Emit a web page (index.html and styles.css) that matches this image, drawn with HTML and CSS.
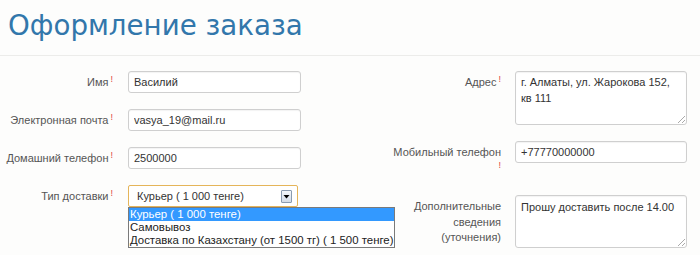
FILE: index.html
```html
<!DOCTYPE html>
<html lang="ru">
<head>
<meta charset="utf-8">
<title>Оформление заказа</title>
<link rel="stylesheet" href="styles.css">
</head>
<body>
<div class="page">
  <header class="header">
    <h1 class="title">Оформление заказа</h1>
  </header>
  <form class="form">
    <div class="col col-left">
      <div class="row">
        <label class="label">Имя<sup class="req">!</sup></label>
        <div class="field"><input class="input" type="text" value="Василий"></div>
      </div>
      <div class="row">
        <label class="label">Электронная почта<sup class="req">!</sup></label>
        <div class="field"><input class="input" type="text" value="vasya_19@mail.ru"></div>
      </div>
      <div class="row">
        <label class="label">Домашний телефон<sup class="req">!</sup></label>
        <div class="field"><input class="input" type="text" value="2500000"></div>
      </div>
      <div class="row">
        <label class="label">Тип доставки<sup class="req">!</sup></label>
        <div class="field field-select">
          <div class="select">
            <span class="select-value">Курьер ( 1 000 тенге)</span>
            <span class="select-btn">
              <svg width="9" height="9" viewBox="0 0 9 9"><path d="M1.5 3h6L4.5 6.5z" fill="#000"/></svg>
            </span>
          </div>
          <ul class="dropdown">
            <li class="option active">Курьер ( 1 000 тенге)</li>
            <li class="option">Самовывоз</li>
            <li class="option">Доставка по Казахстану (от 1500 тг) ( 1 500 тенге)</li>
          </ul>
        </div>
      </div>
    </div>
    <div class="col col-right">
      <div class="row">
        <label class="label">Адрес<sup class="req">!</sup></label>
        <div class="field"><div class="textarea">г. Алматы, ул. Жарокова 152, кв 111<span class="grip"></span></div></div>
      </div>
      <div class="row row-mobile">
        <label class="label">Мобильный телефон<br><sup class="req">!</sup></label>
        <div class="field"><input class="input" type="text" value="+77770000000"></div>
      </div>
      <div class="row">
        <label class="label">Дополнительные<br>сведения<br>(уточнения)</label>
        <div class="field"><div class="textarea textarea-sm">Прошу доставить после 14.00<span class="grip"></span></div></div>
      </div>
    </div>
  </form>
</div>
</body>
</html>
```
FILE: styles.css
```css
* { box-sizing: border-box; }
html, body { margin: 0; padding: 0; }
body {
  background: #fdfdfc;
  font-family: "Liberation Sans", Arial, sans-serif;
  font-size: 11px;
  color: #555;
  width: 700px;
  height: 255px;
  overflow: hidden;
}
.header {
  padding: 6px 8px 0;
  height: 56px;
  border-bottom: 1px solid #ececea;
}
.title {
  margin: 0;
  font-family: "DejaVu Sans", Verdana, sans-serif;
  font-weight: normal;
  font-size: 27.7px;
  line-height: 40px;
  color: #3277ab;
}
.form {
  display: grid;
  grid-template-columns: 386px 1fr;
  padding-top: 15px;
}
.col { display: flex; flex-direction: column; gap: 16px; }
.row { display: flex; gap: 14px; align-items: flex-start; }
.label {
  width: 115px;
  flex: none;
  text-align: right;
  padding-top: 4px;
  line-height: 15.5px;
  white-space: nowrap;
  color: #555;
}
.col-left .label { width: 114px; padding-right: 1px; }
.req {
  color: #e0463c;
  font-size: 9px;
  vertical-align: top;
  position: relative;
  top: -3px;
  margin-left: 2px;
}
.field { width: 173px; flex: none; }
.input {
  display: block;
  width: 173px;
  height: 22px;
  margin: 0;
  padding: 0 5px;
  border: 1px solid #cfcfcf;
  border-radius: 3px;
  background: #fff;
  box-shadow: inset 0 1px 1px rgba(0,0,0,0.05);
  font-family: "Liberation Sans", Arial, sans-serif;
  font-size: 11px;
  color: #333;
  outline: none;
}
.col-right .field { width: 172px; }
.col-right .input { width: 172px; }
.textarea {
  position: relative;
  width: 172px;
  height: 54px;
  padding: 2px 5px;
  border: 1px solid #cfcfcf;
  border-radius: 3px;
  background: #fff;
  box-shadow: inset 0 1px 1px rgba(0,0,0,0.05);
  font-size: 11px;
  line-height: 16px;
  color: #333;
}
.textarea-sm { height: 53px; padding-top: 3px; }
.grip {
  position: absolute;
  right: 1px;
  bottom: 1px;
  width: 7px;
  height: 7px;
  background: linear-gradient(135deg, transparent 45%, #aaa 45%, #aaa 55%, transparent 55%, transparent 72%, #aaa 72%, #aaa 82%, transparent 82%);
}
.row-mobile .label { padding-bottom: 3px; }
.field-select { position: relative; width: 170px; }
.select {
  display: flex;
  align-items: center;
  justify-content: space-between;
  height: 22px;
  width: 170px;
  padding: 0 5px 0 8px;
  border: 1px solid #e5b55a;
  border-radius: 2px;
  background: #fff;
  color: #333;
  font-size: 11px;
}
.select-value { line-height: 20px; }
.select-btn {
  display: flex;
  align-items: center;
  justify-content: center;
  width: 11px;
  height: 13px;
  border: 1px solid #8a9bb0;
  border-radius: 1px;
  background: linear-gradient(#f4f7fb, #d3dce8);
}
.dropdown {
  position: absolute;
  left: 0;
  top: 22px;
  margin: 0;
  padding: 0;
  list-style: none;
  border: 1px solid #7a7a7a;
  background: #fff;
  white-space: nowrap;
  z-index: 2;
}
.option {
  height: 13px;
  line-height: 13px;
  padding: 0 1px 0 1px;
  font-size: 11.4px;
  color: #222;
}
.option.active { background: #3399ff; color: #fff; }
```
